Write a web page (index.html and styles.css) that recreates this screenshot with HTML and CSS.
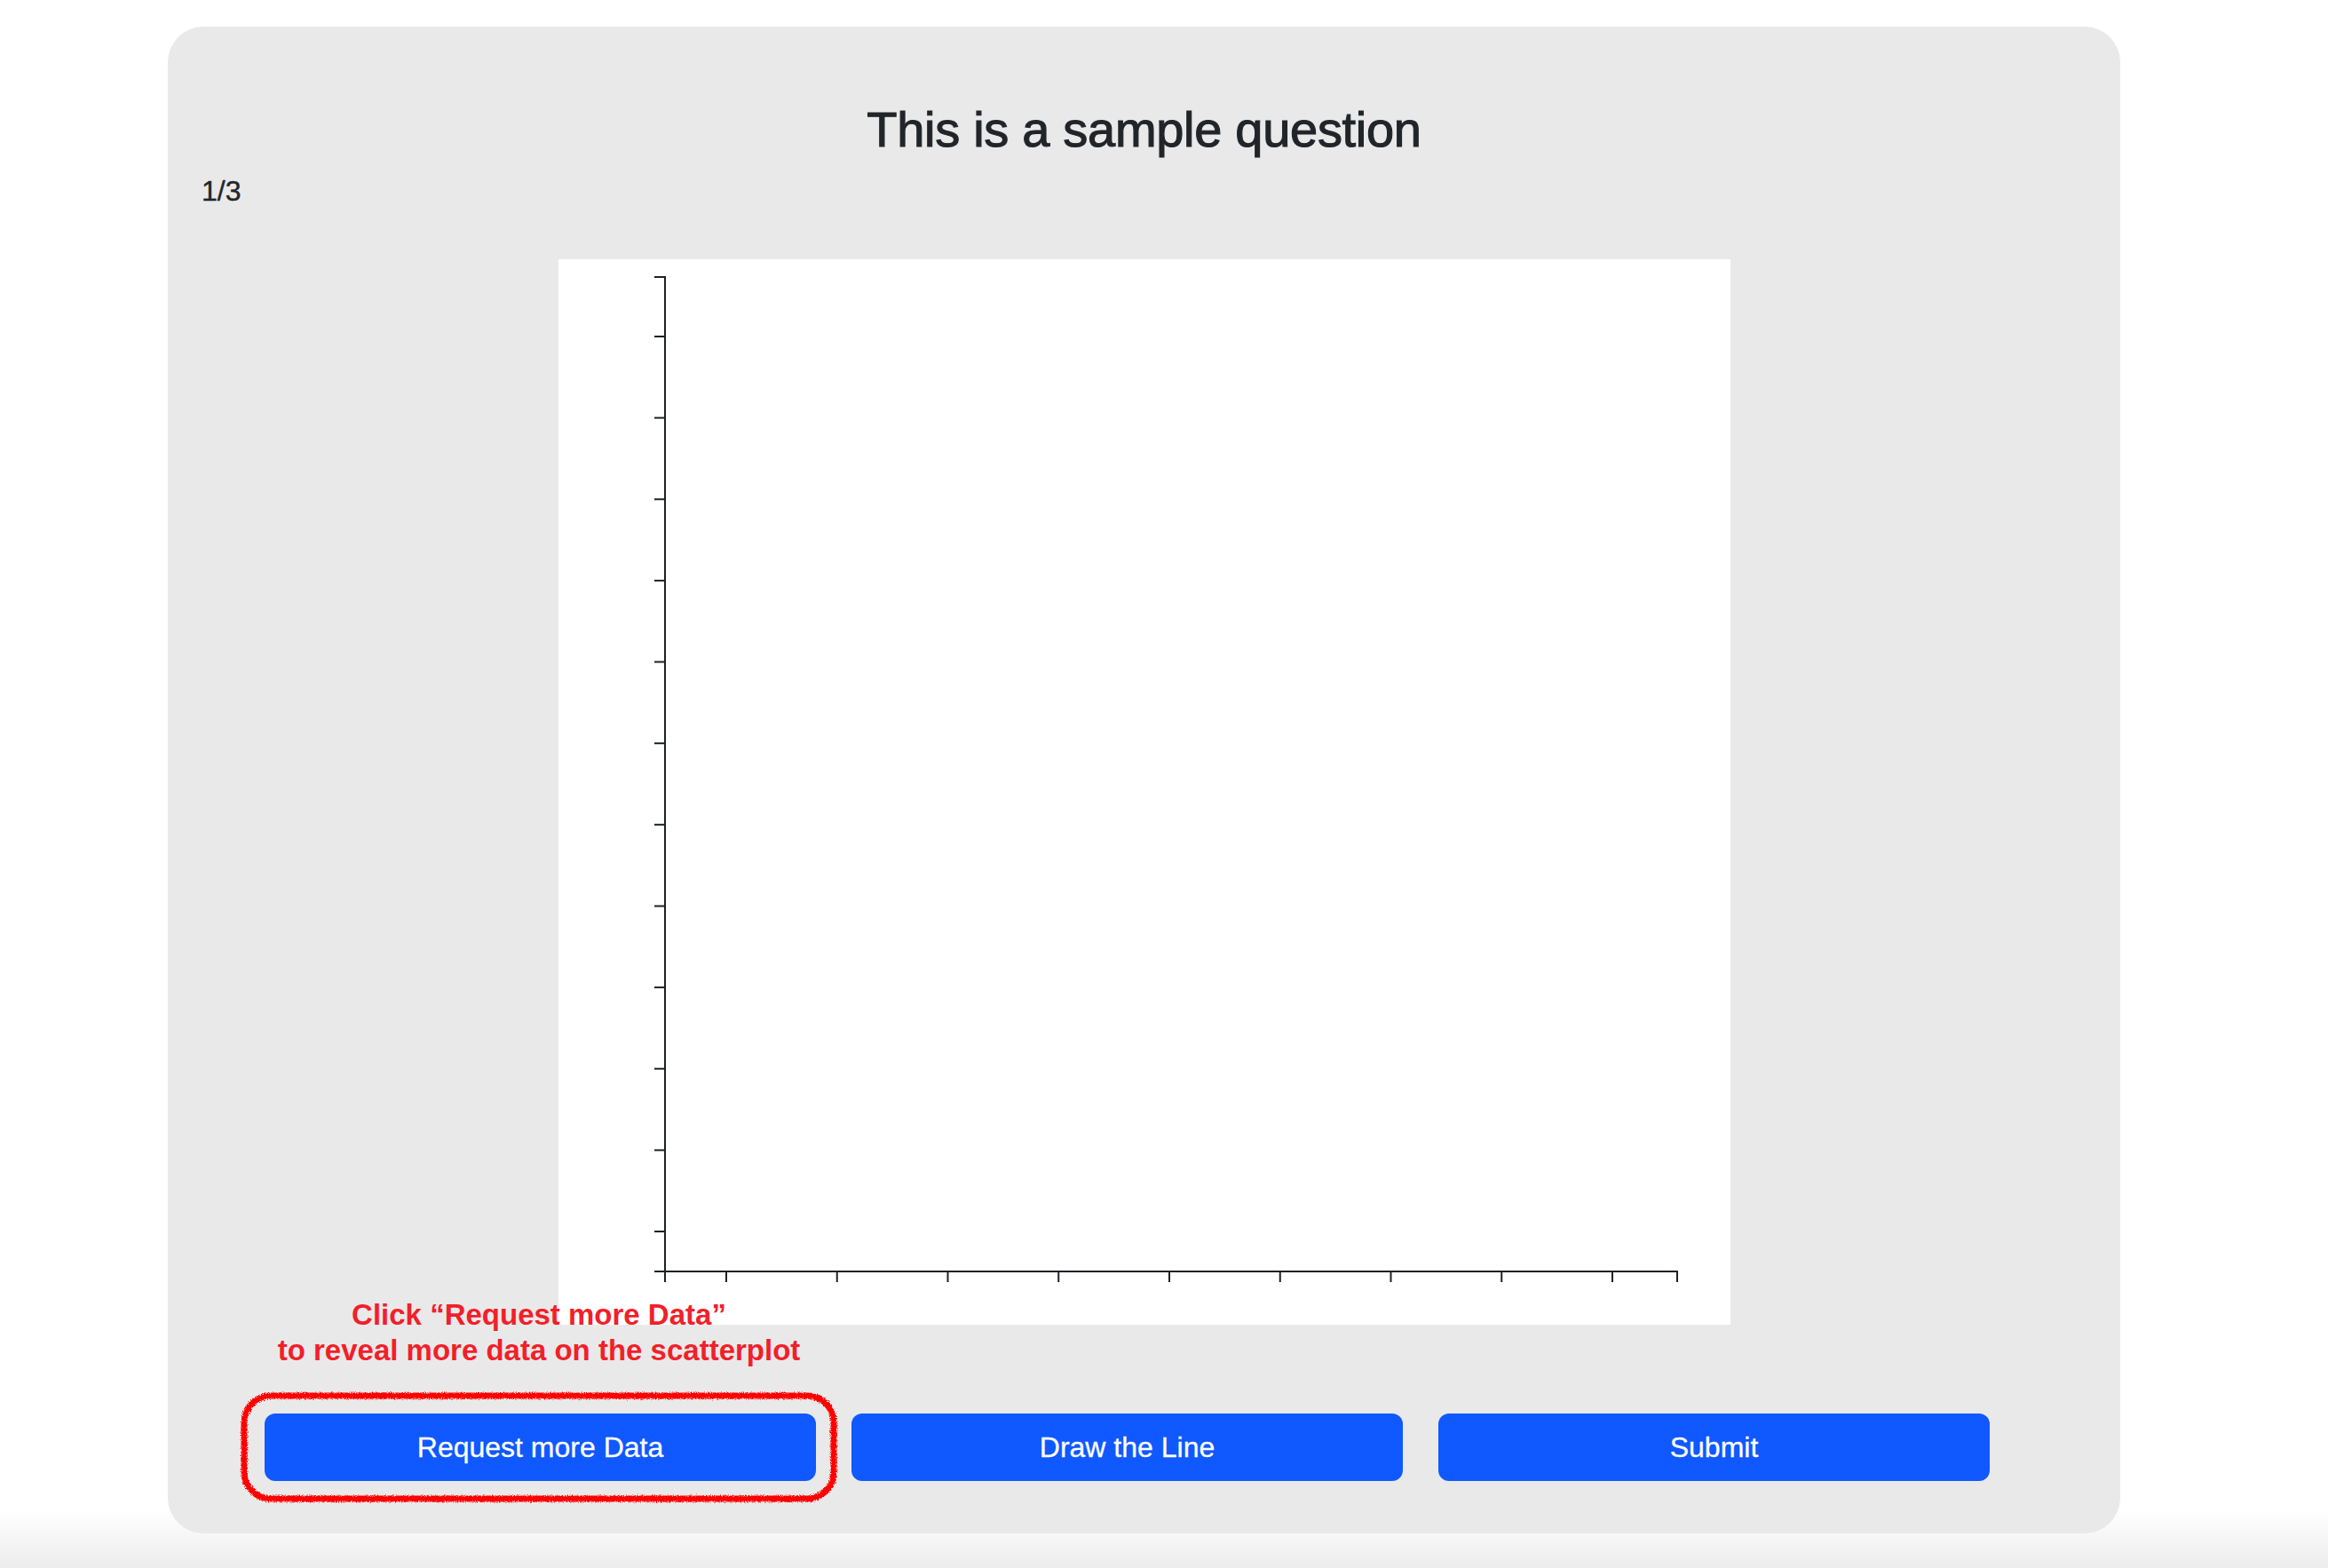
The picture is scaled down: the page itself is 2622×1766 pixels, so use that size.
FILE: index.html
```html
<!DOCTYPE html>
<html lang="en">
<head>
<meta charset="utf-8">
<title>Sample question</title>
<link rel="stylesheet" href="styles.css">
</head>
<body>
<main class="card">
  <h3 class="title">This is a sample question</h3>
  <div class="counter">1/3</div>
  <div class="chart">
    <svg class="plot" width="1320" height="1200" viewBox="0 0 1320 1200">
      <g class="axis">
        <path d="M108,20 H120 V1140 H108" />
        <path d="M120,1152 V1140 H1260 V1152" />
        <g class="yticks">
          <line x1="108" x2="120" y1="87" y2="87" />
          <line x1="108" x2="120" y1="178.6" y2="178.6" />
          <line x1="108" x2="120" y1="270.3" y2="270.3" />
          <line x1="108" x2="120" y1="361.9" y2="361.9" />
          <line x1="108" x2="120" y1="453.5" y2="453.5" />
          <line x1="108" x2="120" y1="545.2" y2="545.2" />
          <line x1="108" x2="120" y1="636.8" y2="636.8" />
          <line x1="108" x2="120" y1="728.5" y2="728.5" />
          <line x1="108" x2="120" y1="820.1" y2="820.1" />
          <line x1="108" x2="120" y1="911.7" y2="911.7" />
          <line x1="108" x2="120" y1="1003.4" y2="1003.4" />
          <line x1="108" x2="120" y1="1095" y2="1095" />
        </g>
        <g class="xticks">
          <line x1="189" x2="189" y1="1140" y2="1152" />
          <line x1="313.75" x2="313.75" y1="1140" y2="1152" />
          <line x1="438.5" x2="438.5" y1="1140" y2="1152" />
          <line x1="563.25" x2="563.25" y1="1140" y2="1152" />
          <line x1="688" x2="688" y1="1140" y2="1152" />
          <line x1="812.75" x2="812.75" y1="1140" y2="1152" />
          <line x1="937.5" x2="937.5" y1="1140" y2="1152" />
          <line x1="1062.25" x2="1062.25" y1="1140" y2="1152" />
          <line x1="1187" x2="1187" y1="1140" y2="1152" />
        </g>
      </g>
    </svg>
  </div>
  <div class="actions">
    <button class="btn">Request more Data</button>
    <button class="btn">Draw the Line</button>
    <button class="btn">Submit</button>
  </div>
  <div class="hint">Click “Request more Data”<br>to reveal more data on the scatterplot</div>
  <svg class="highlight" width="674" height="126" viewBox="0 0 674 126">
    <defs>
      <filter id="rough" x="-5%" y="-10%" width="110%" height="120%">
        <feTurbulence type="fractalNoise" baseFrequency="0.95" numOctaves="2" seed="5" result="n"/>
        <feDisplacementMap in="SourceGraphic" in2="n" scale="5" xChannelSelector="R" yChannelSelector="G"/>
      </filter>
    </defs>
    <rect x="5" y="5" width="664" height="116" rx="30" ry="30" filter="url(#rough)" />
  </svg>
</main>
</body>
</html>
```

FILE: styles.css
```css
html {
  height: 1766px;
  background: linear-gradient(to bottom, #ffffff 0, #ffffff 1700px, #ececec 1766px);
}

body {
  margin: 0;
  font-family: "Liberation Sans", Arial, sans-serif;
  color: #212529;
}

.card {
  position: relative;
  box-sizing: border-box;
  width: 2199px;
  margin: 30px 0 0 189px;
  padding: 82px 0 59px;
  background: #e9e9e9;
  border-radius: 40px;
}

.title {
  margin: 0;
  font-size: 56px;
  line-height: 68px;
  font-weight: 400;
  letter-spacing: -0.3px;
  text-align: center;
  -webkit-text-stroke: 1.1px #212529;
}

.counter {
  margin: 11px 0 0 38px;
  font-size: 32px;
  line-height: 48px;
  -webkit-text-stroke: 0.4px #212529;
}

.chart {
  width: 1320px;
  height: 1200px;
  margin: 53px auto 0;
  background: #ffffff;
}

.plot {
  display: block;
}

.axis path,
.axis line {
  fill: none;
  stroke: #1e2124;
  stroke-width: 2;
}

.actions {
  display: flex;
  gap: 40px;
  margin: 100px 0 0 109px;
}

.btn {
  width: 621px;
  height: 76px;
  padding: 0;
  border: 0;
  border-radius: 12px;
  background: #1058ff;
  color: #ffffff;
  font-family: "Liberation Sans", Arial, sans-serif;
  font-size: 32px;
  line-height: 48px;
  -webkit-text-stroke: 0.3px #ffffff;
}

.hint {
  position: absolute;
  left: 68px;
  top: 1431px;
  width: 700px;
  text-align: center;
  color: #f21f2a;
  font-weight: 700;
  font-size: 33px;
  line-height: 40px;
}

.highlight {
  position: absolute;
  left: 81px;
  top: 1537px;
}

.highlight rect {
  fill: none;
  stroke: #ff0000;
  stroke-width: 7;
}
```
